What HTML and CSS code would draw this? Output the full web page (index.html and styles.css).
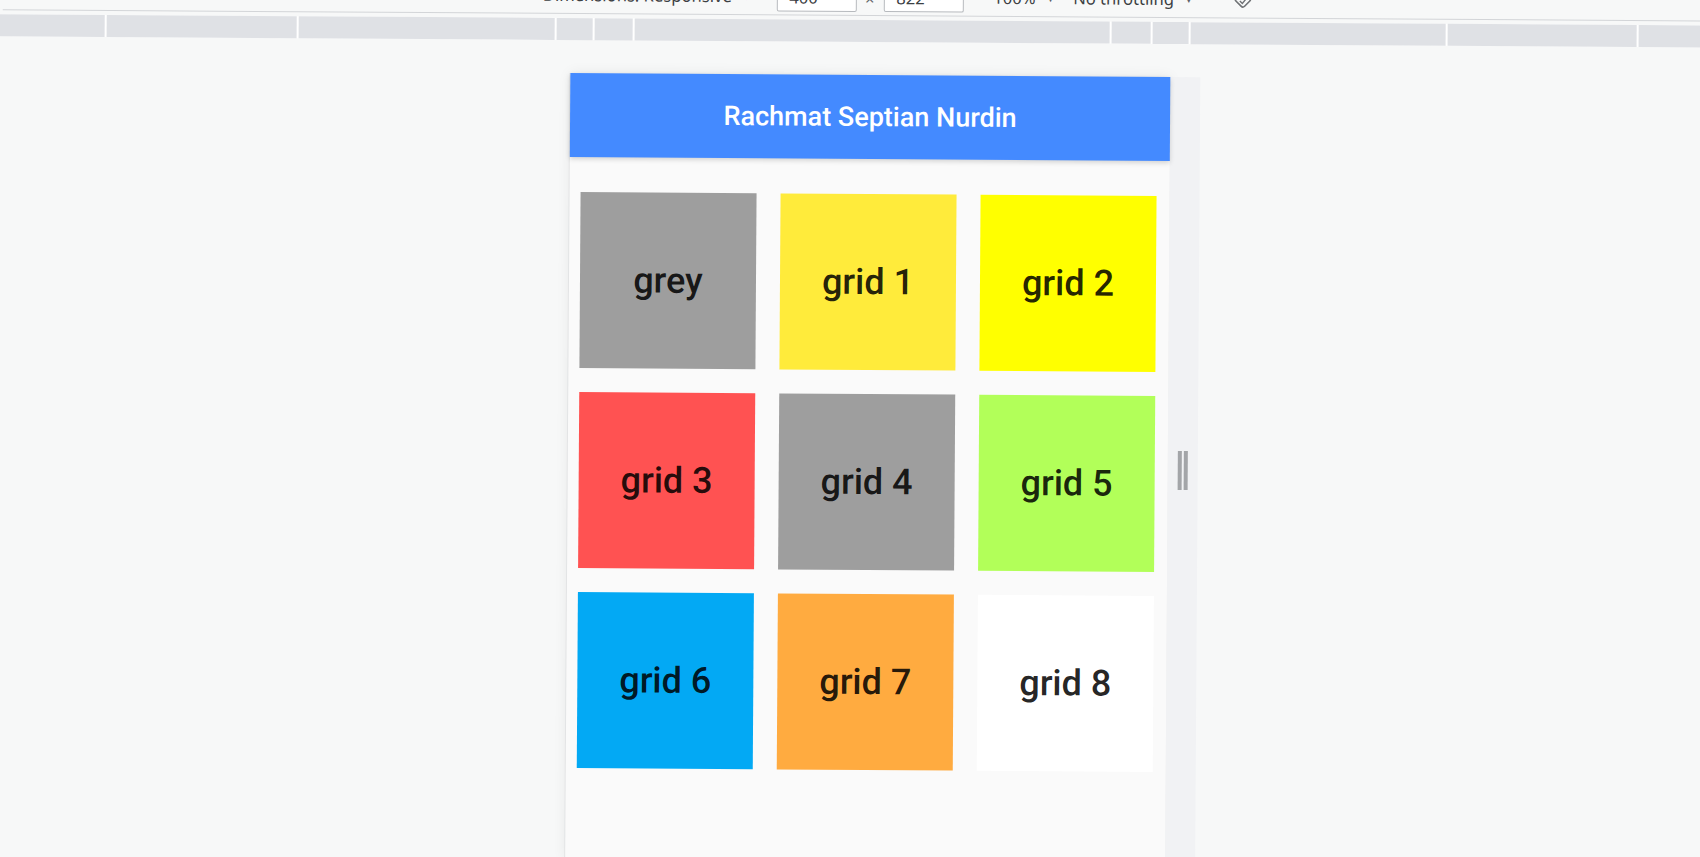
FILE: index.html
```html
<!DOCTYPE html>
<html lang="en">
<head>
<meta charset="utf-8">
<title>Rachmat Septian Nurdin</title>
<link rel="stylesheet" href="styles.css">
</head>
<body>
<div class="stage">
  <div class="toolbar">
    <span class="tb-text tb-dims">Dimensions: Responsive</span>
    <span class="tb-caret">▾</span>
    <span class="tb-input tb-w">400</span>
    <span class="tb-times">×</span>
    <span class="tb-input tb-h">822</span>
    <span class="tb-text tb-zoom">100%</span>
    <span class="tb-caret">▾</span>
    <span class="tb-text tb-throttle">No throttling</span>
    <span class="tb-caret">▾</span>
    <svg class="tb-icon" width="22" height="22" viewBox="0 0 22 22" aria-hidden="true">
      <rect x="5" y="5" width="12" height="12" rx="2.5" transform="rotate(45 11 11)" fill="none" stroke="#6f7275" stroke-width="1.6"/>
      <path d="M8 12.5 L10.5 15 L14.5 10" fill="none" stroke="#6f7275" stroke-width="1.4"/>
    </svg>
  </div>
  <div class="ruler">
    <div class="seg s1"></div><div class="seg s2"></div><div class="seg s3"></div>
    <div class="seg s4"></div><div class="seg s5"></div><div class="seg s6"></div>
    <div class="seg s7"></div><div class="seg s8"></div><div class="seg s9"></div>
    <div class="seg s10"></div><div class="seg s11"></div>
  </div>
  <div class="workspace">
    <div class="device">
      <header class="appbar">Rachmat Septian Nurdin</header>
      <main class="grid">
        <div class="tile grey">grey</div>
        <div class="tile yellow">grid 1</div>
        <div class="tile bright-yellow">grid 2</div>
        <div class="tile red">grid 3</div>
        <div class="tile grey">grid 4</div>
        <div class="tile green">grid 5</div>
        <div class="tile blue">grid 6</div>
        <div class="tile orange">grid 7</div>
        <div class="tile white">grid 8</div>
      </main>
    </div>
    <div class="gutter">
      <div class="handle"><span></span><span></span></div>
    </div>
  </div>
</div>
</body>
</html>
```

FILE: styles.css
```css
html, body {
  margin: 0;
  padding: 0;
  width: 1700px;
  height: 857px;
  overflow: hidden;
  background: #f7f8f8;
}

.stage {
  width: 1700px;
  height: 900px;
  transform: rotate(0.38deg);
  transform-origin: 868px 430px;
}

/* devtools device toolbar (mostly scrolled out of view) */
.toolbar {
  height: 16px;
  box-sizing: border-box;
  border-bottom: 1px solid #d3d5d8;
  display: flex;
  align-items: flex-end;
  padding-left: 540px;
  padding-bottom: 3px;
  font-family: "Noto Sans", "DejaVu Sans", sans-serif;
  font-size: 16.6px;
  color: #3c4043;
  margin: 0 -60px 0 0;
}

.tb-text {
  line-height: 20px;
  margin-bottom: 5px;
  white-space: nowrap;
}

.tb-caret {
  line-height: 20px;
  margin-bottom: 5px;
  font-size: 11px;
  color: #5f6368;
  margin-left: 12px;
}

.tb-dims { width: 189px; }

.tb-input {
  box-sizing: border-box;
  width: 80px;
  height: 28px;
  background: #fff;
  border: 1px solid #b7babe;
  border-radius: 2px;
  line-height: 26px;
  padding-left: 12px;
  margin-bottom: 0;
}

.tb-w { margin-left: 27px; }

.tb-times {
  width: 27px;
  text-align: center;
  line-height: 20px;
  margin-bottom: 3px;
  color: #5f6368;
}

.tb-zoom { margin-left: 30px; }
.tb-throttle { margin-left: 20px; }

.tb-icon {
  margin-left: 40px;
  margin-bottom: 4px;
}

/* preset width ruler */
.ruler {
  margin: 4px 0 0 -40px;
  width: 1790px;
  height: 22px;
  display: flex;
  gap: 2px;
  background: #ffffff;
}

.seg { background: #dfe1e5; height: 100%; }
.s1 { width: 142px; }
.s2 { width: 190px; }
.s3 { width: 256px; }
.s4 { width: 36px; }
.s5 { width: 38px; }
.s6 { width: 475px; }
.s7 { width: 39px; }
.s8 { width: 36px; }
.s9 { width: 255px; }
.s10 { width: 189px; }
.s11 { flex: 1; }

/* emulated device */
.workspace {
  display: flex;
  padding-left: 568px;
  margin-top: 33px;
}

.device {
  width: 600px;
  height: 786px;
  background: #fafafa;
  box-shadow: -1px 0 0 #e3e4e5, 0 0 14px rgba(0, 0, 0, 0.07);
  display: flex;
  flex-direction: column;
  font-family: Roboto, "Liberation Sans", sans-serif;
}

.appbar {
  height: 84px;
  flex: none;
  background: #448aff;
  color: #ffffff;
  font-size: 27px;
  font-weight: 500;
  display: flex;
  align-items: center;
  justify-content: center;
  box-shadow: 0 2px 5px rgba(0, 0, 0, 0.16);
  position: relative;
}

.grid {
  display: grid;
  grid-template-columns: repeat(3, 176px);
  grid-auto-rows: 176px;
  gap: 24px;
  padding: 35px 0 0 11px;
}

.tile {
  display: flex;
  align-items: center;
  justify-content: center;
  font-size: 36px;
  font-weight: 500;
  color: rgba(0, 0, 0, 0.87);
}

.grey { background: #9e9e9e; }
.yellow { background: #ffeb3b; }
.bright-yellow { background: #ffff00; }
.red { background: #ff5252; }
.green { background: #b2ff59; }
.blue { background: #03a9f4; }
.orange { background: #ffab40; }
.white { background: #ffffff; }

.gutter {
  width: 30px;
  height: 786px;
  background: #f1f2f4;
  display: flex;
  align-items: center;
  justify-content: center;
}

.handle {
  display: flex;
  gap: 2px;
  height: 39px;
}

.handle span {
  width: 4px;
  background: #a3a5a8;
}
```
